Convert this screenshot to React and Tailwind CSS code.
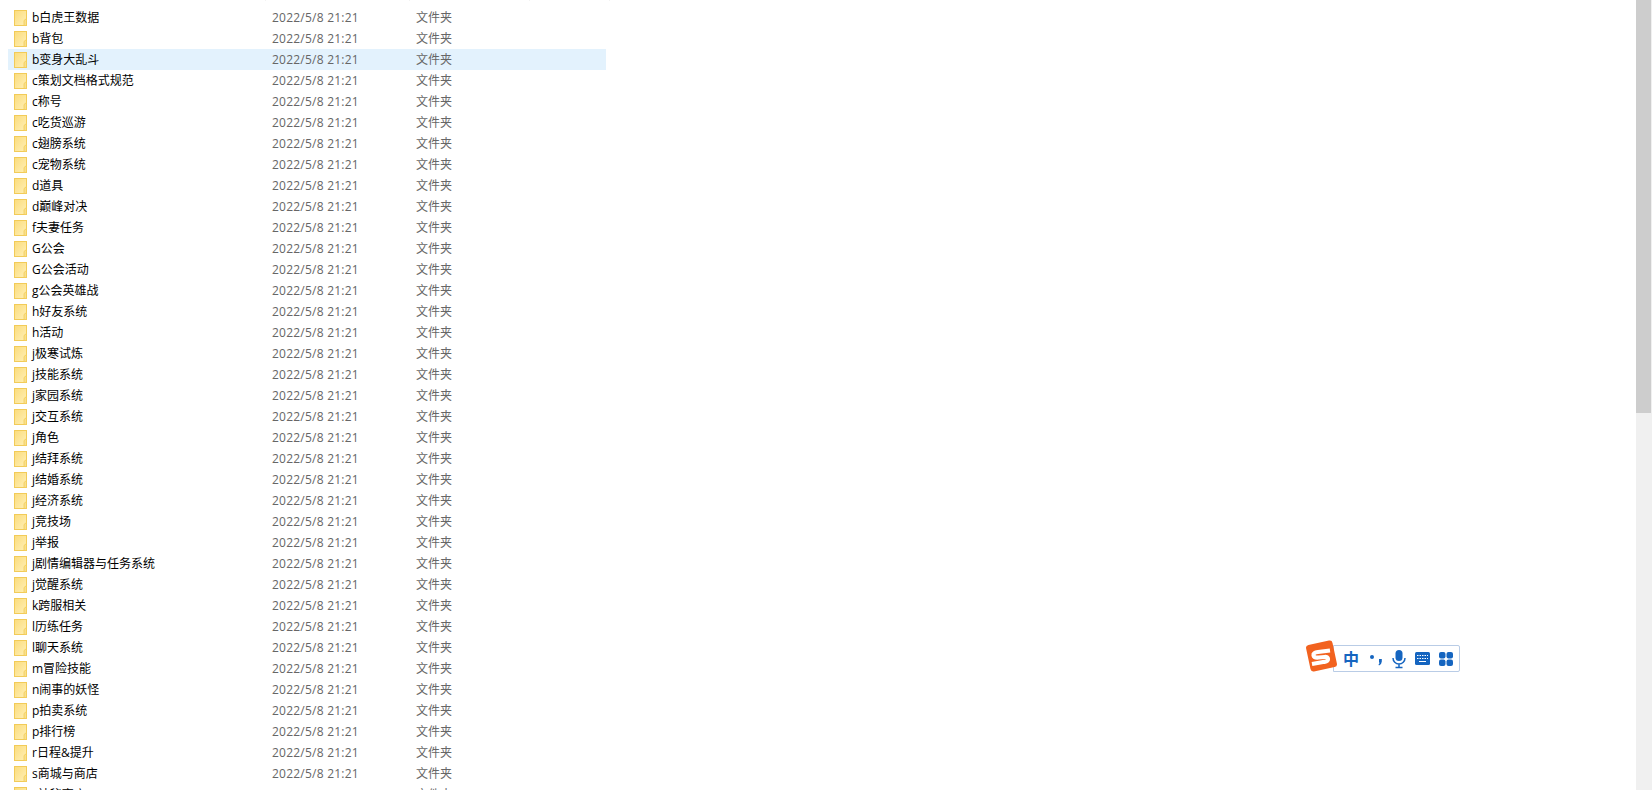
import React from "react";

const names = [
  "b白虎王数据", "b背包", "b变身大乱斗", "c策划文档格式规范", "c称号", "c吃货巡游", "c翅膀系统", "c宠物系统",
  "d道具", "d巅峰对决", "f夫妻任务", "G公会", "G公会活动", "g公会英雄战", "h好友系统", "h活动",
  "j极寒试炼", "j技能系统", "j家园系统", "j交互系统", "j角色", "j结拜系统", "j结婚系统", "j经济系统",
  "j竞技场", "j举报", "j剧情编辑器与任务系统", "j觉醒系统", "k跨服相关", "l历练任务", "l聊天系统", "m冒险技能",
  "n闹事的妖怪", "p拍卖系统", "p排行榜", "r日程&提升", "s商城与商店", "s神秘商店",
];

const FolderIcon = () => (
  <svg width="13" height="16" viewBox="0 0 13 16" className="shrink-0">
    <defs>
      <linearGradient id="folderFill" x1="0" y1="0" x2="1" y2="1">
        <stop offset="0" stopColor="#fbdc7c" />
        <stop offset="1" stopColor="#fff0b8" />
      </linearGradient>
    </defs>
    <rect x="0.5" y="0.5" width="12" height="15" fill="url(#folderFill)" stroke="#f2cb58" />
    <path d="M10 15.500v-5l2.500-2v7z" fill="#f9e08c" stroke="#f2cb58" strokeWidth="0.8" />
  </svg>
);

const FileRow = ({ name, active }) => (
  <div className={`flex h-[21px] w-[598px] items-center pl-[6px] ${active ? "bg-[#e3f2fd]" : ""}`}>
    <FolderIcon />
    <span className="ml-[5px] w-[240px] text-black">{name}</span>
    <span className="w-[144px] tracking-[0.23px] text-[#666]">2022/5/8 21:21</span>
    <span className="text-[#666]">文件夹</span>
  </div>
);

const ImeBar = () => (
  <div className="absolute left-[1306px] top-[640px] flex items-end">
    <svg width="31" height="32" viewBox="0 0 31 32" className="relative z-10">
      <rect x="2" y="2.500" width="27" height="27" rx="3" fill="#f2621f" transform="rotate(-12 15.500 16)" />
      <path d="M24 10.500 12 12q-5 .7-4.500 3.300t5 2.200l6-.5q3.500-.3 3.500 2t-3.500 2.800L6 24" fill="none" stroke="#fff" strokeWidth="4.200" />
    </svg>
    <div className="-ml-[4px] flex h-[27px] w-[127px] items-center rounded-r-[2px] border border-[#b9cce6] bg-white pl-[9px] text-[#1565c0]">
      <span className="w-[26px] text-[16px] font-bold leading-none">中</span>
      <svg width="14" height="14" viewBox="0 0 14 14" fill="#1565c0">
        <circle cx="3" cy="5" r="2" />
        <path d="M10 7h2.800v2.500Q12.800 12 10 13.500l-.5-1q1-.5 1-2H10z" />
      </svg>
      <svg width="16" height="20" viewBox="0 0 16 20" className="ml-[8px]" fill="#1565c0">
        <rect x="4.500" y="1" width="7" height="11" rx="3.500" />
        <path d="M2 9a6 6 0 0 0 12 0M8 15v3M4.500 18.500h7" fill="none" stroke="#1565c0" strokeWidth="1.500" />
      </svg>
      <svg width="15" height="13" viewBox="0 0 15 13" className="ml-[8px]">
        <rect x="0" y="0" width="15" height="13" rx="1.500" fill="#1565c0" />
        <path d="M2 3.500h11M2 6.500h11" stroke="#fff" strokeDasharray="1.500 1" />
        <path d="M4 9.500h7" stroke="#fff" />
      </svg>
      <svg width="14" height="14" viewBox="0 0 14 14" className="ml-[9px]" fill="#1565c0">
        <rect x="0" y="0" width="6.500" height="6.500" rx="2" />
        <rect x="7.500" y="0" width="6.500" height="6.500" rx="2" />
        <rect x="0" y="7.500" width="6.500" height="6.500" rx="2" />
        <rect x="7.500" y="7.500" width="6.500" height="6.500" rx="2" />
      </svg>
    </div>
  </div>
);

export default function App() {
  return (
    <div
      className="relative flex h-[790px] overflow-hidden bg-white text-[12px]"
      style={{ fontFamily: '"Open Sans", "Noto Sans CJK SC", sans-serif' }}
    >
      <main className="flex-1 overflow-hidden pl-[8px]">
        {/* column dividers of the header that has scrolled away */}
        <div className="mb-[6px] flex h-px">
          <div className="w-[258px] border-r border-[#f3f3f3]" />
          <div className="w-[144px] border-r border-[#f3f3f3]" />
          <div className="w-[120px] border-r border-[#f3f3f3]" />
          <div className="w-[80px] border-r border-[#f3f3f3]" />
        </div>
        {names.map((name, i) => (
          <FileRow key={name} name={name} active={i === 2} />
        ))}
      </main>
      <div className="w-[16px] shrink-0 bg-[#f0f0f0]">
        <div className="h-[413px] w-[15px] bg-[#cdcdcd]" />
      </div>
      <ImeBar />
    </div>
  );
}
